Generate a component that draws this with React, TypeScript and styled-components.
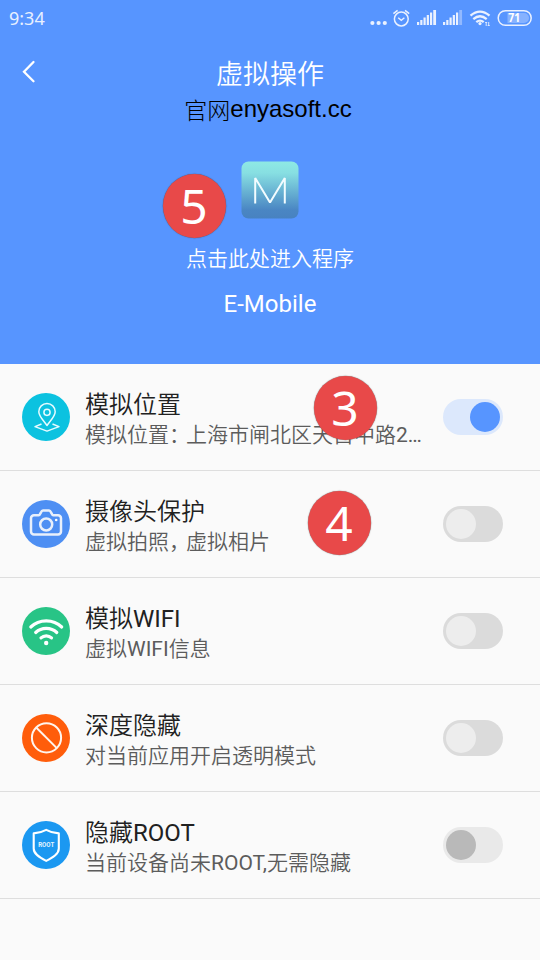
import React from 'react';
import styled, { createGlobalStyle } from 'styled-components';

const GlobalStyle = createGlobalStyle`
  *, *::before, *::after { box-sizing: border-box; }
  body { margin: 0; background: #fafafa; }
`;

const Screen = styled.div`
  position: relative;
  width: 540px;
  height: 960px;
  overflow: hidden;
  background: #fafafa;
  font-family: Roboto, 'Noto Sans CJK SC', sans-serif;
`;

const Header = styled.header`
  display: flex;
  flex-direction: column;
  align-items: center;
  height: 364px;
  background: #5795ff;
  color: #fff;
`;

const StatusBar = styled.div`
  display: flex;
  align-items: center;
  justify-content: space-between;
  width: 100%;
  height: 37px;
  padding: 0 0 0 9px;
`;

const Clock = styled.span`
  font: 400 18px/37px 'Noto Sans', sans-serif;
  color: #e8f0ff;
`;

const TitleBar = styled.div`
  display: grid;
  grid-template-columns: 60px 1fr 60px;
  align-items: center;
  width: 100%;
  height: 70px;
`;

const BackButton = styled.button`
  display: flex;
  align-items: center;
  height: 48px;
  margin: 0;
  padding: 0 0 0 20px;
  border: 0;
  background: none;
  color: #fff;
`;

const Title = styled.h1`
  margin: 0;
  padding-top: 5px;
  font-size: 27px;
  line-height: 40px;
  font-weight: 350;
  text-align: center;
`;

const Site = styled.div`
  display: flex;
  align-items: center;
  justify-content: center;
  height: 30px;
  margin: -13px 4px 0 0;
  color: #000;
  font: 400 24px/30px 'Liberation Sans', sans-serif;
`;

const SiteLabel = styled.span`
  font: 300 23px/30px 'Noto Sans CJK SC', sans-serif;
`;

const AppIcon = styled.svg`
  display: block;
  margin-top: 37px;
`;

const Hint = styled.div`
  margin-top: 25px;
  font-size: 21px;
  line-height: 30px;
  font-weight: 350;
`;

const AppName = styled.div`
  margin-top: 15px;
  font-size: 24px;
  line-height: 30px;
`;

const Row = styled.div`
  display: flex;
  align-items: center;
  height: 107px;
  padding: 0 37.5px 0 22px;
  border-bottom: 1px solid #dedede;
`;

const RowIcon = styled.svg`
  flex: none;
  display: block;
`;

const RowText = styled.div`
  flex: none;
  width: 350px;
  margin: 0 auto 0 15px;
  padding-top: 6px;
`;

const RowTitle = styled.div`
  font-size: 24px;
  line-height: 30px;
  font-weight: 350;
  color: #212121;
`;

const RowDetail = styled.div`
  height: 31px;
  font-size: 21px;
  line-height: 31px;
  font-weight: 350;
  color: #5c5c5c;
  white-space: nowrap;
`;

const Latin = styled.span`
  font-weight: 400;
`;

const Punctuation = styled.span`
  display: inline-block;
  width: 17px;
`;

type ToggleState = 'on' | 'off' | 'disabled';
const trackColor = { on: '#dce8fc', off: '#dbdbdb', disabled: '#e9e9e9' };
const thumbColor = { on: '#5795ff', off: '#ededed', disabled: '#b9b9b9' };

const Toggle = styled.div<{ $state: ToggleState }>`
  display: flex;
  flex: none;
  align-items: center;
  justify-content: ${(p) => (p.$state === 'on' ? 'flex-end' : 'flex-start')};
  width: 60px;
  height: 36px;
  padding: 3px;
  border-radius: 18px;
  background: ${(p) => trackColor[p.$state]};
`;

const Thumb = styled.div<{ $state: ToggleState }>`
  width: 30px;
  height: 30px;
  border-radius: 50%;
  background: ${(p) => thumbColor[p.$state]};
`;

const StepBadge = styled.div<{ $x: number; $y: number }>`
  position: absolute;
  left: ${(p) => p.$x}px;
  top: ${(p) => p.$y}px;
  width: 63px;
  height: 64px;
  border-radius: 50%;
  background: #e84949;
  box-shadow: 0 0 1px 0.3px rgba(60, 60, 60, 0.6);
  color: #fff;
  font: 400 48px/63px 'Noto Sans', sans-serif;
  text-align: center;
`;

/* Han characters keep the lighter weight; Latin runs and wide punctuation get their own spans. */
function Mixed({ text }: { text: string }) {
  return (
    <>
      {text.split(/([\x20-\x7e…]+|[：，])/).map((part, i) => {
        if (/^[\x20-\x7e…]+$/.test(part)) return <Latin key={i}>{part}</Latin>;
        if (/^[：，]$/.test(part)) return <Punctuation key={i}>{part}</Punctuation>;
        return part;
      })}
    </>
  );
}

function StatusIcons() {
  const heights = [3, 5, 7.5, 10, 12.5, 15];
  return (
    <svg width="180" height="37" viewBox="0 0 180 37" fill="none" stroke="#eaf1ff">
      <g fill="#eaf1ff" stroke="none">
        <circle cx="12.4" cy="23" r="2.1" />
        <circle cx="18.6" cy="23" r="2.1" />
        <circle cx="24.8" cy="23" r="2.1" />
        {heights.map((h, i) => (
          <rect key={h} x={57 + i * 3.25} y={25 - h} width={i === 5 ? 2.8 : 2.2} height={h} />
        ))}
        {heights.map((h, i) => (
          <rect key={h} x={83 + i * 3.25} y={25 - h} width={i === 5 ? 2.8 : 2.2} height={h} opacity={i === 5 ? 0.4 : 1} />
        ))}
      </g>
      <circle cx="41.3" cy="19" r="6.9" strokeWidth="1.5" />
      <path d="M38.2 17.8l3.1 2.5 3.1-2.5" strokeWidth="1.4" />
      <path d="M33.4 13.6l4.2-3.2M49.2 13.6l-4.2-3.2" strokeWidth="1.6" />
      <path d="M110.5 15.7Q120 7.5 129.5 15.7M113.3 19.1Q120 13.3 126.7 19.1M116.3 22.2Q120 19 123.7 22.2" strokeWidth="2.3" />
      <circle cx="120" cy="23.6" r="1.6" fill="#eaf1ff" stroke="none" />
      <path d="M126.2 22v4M125.2 23l1-1 1 1M128.7 26v-4M127.7 25l1 1 1-1" strokeWidth="0.9" />
      <rect x="138.2" y="10.7" width="33" height="14.6" rx="7.3" strokeWidth="1.5" />
      <path d="M147.5 13H164a5 5 0 0 1 0 10H147.5z" fill="#86b2ff" stroke="none" />
      <text x="154.3" y="22.2" textAnchor="middle" fill="#fff" stroke="none" fontFamily="Noto Sans" fontSize="12" fontWeight="700" textLength="12" lengthAdjust="spacingAndGlyphs">71</text>
    </svg>
  );
}

const LocationGlyph = () => (
  <g fill="none" stroke="#e6fbff" strokeWidth="1.5" strokeLinejoin="round">
    <path d="M25 32.5C21 27 16.8 23 16.8 18.7a8.2 8.2 0 0 1 16.4 0C33.2 23 29 27 25 32.5z" />
    <circle cx="25" cy="19.3" r="3.1" />
    <path d="M19.5 31L13 33.6l12 4.5 12-4.5-6.5-2.6" />
  </g>
);

const CameraGlyph = () => (
  <g fill="none" stroke="#e9f0fb" strokeWidth="2.5" strokeLinejoin="round">
    <path d="M12 15.3h4.7c1.8 0 2-4.8 4.3-4.8h6c2.3 0 2.5 4.8 4.3 4.8H36a3 3 0 0 1 3 3v13.2a3 3 0 0 1-3 3H12a3 3 0 0 1-3-3V18.3a3 3 0 0 1 3-3z" />
    <circle cx="24.2" cy="24.5" r="6" />
    <circle cx="34.2" cy="20" r="1.3" fill="#fff" stroke="none" />
  </g>
);

const WifiGlyph = () => (
  <g fill="none" stroke="#fff" strokeWidth="3.2" strokeLinecap="round">
    <path d="M8.8 20C17.2 11.7 31.3 11.7 39.7 20" />
    <path d="M13.7 25.5C19.5 19.9 29 19.9 34.8 25.5" />
    <path d="M19 30.9C22 28.1 26.5 28.1 29.5 30.9" />
    <circle cx="24.2" cy="36" r="2.2" fill="#fff" stroke="none" />
  </g>
);

const BlockGlyph = () => (
  <g fill="none" stroke="#fff5ee" strokeWidth="2">
    <circle cx="24.5" cy="23.8" r="14.6" />
    <path d="M14.2 13.5l20.6 20.6" />
  </g>
);

const RootGlyph = () => (
  <g>
    <path d="M24.2 8.8C28 10.9 32 12.2 36.8 12.4V27.5c0 5.6-6 9-12.6 12.4C17.5 36.5 11.7 33.1 11.7 27.5V12.4C16.3 12.2 20.3 10.9 24.2 8.8z" fill="none" stroke="#fff" strokeWidth="2.1" strokeLinejoin="round" />
    <text x="24.2" y="26.3" textAnchor="middle" fill="#e4f4ff" fontFamily="Roboto" fontSize="7.5" fontWeight="700" textLength="16" lengthAdjust="spacingAndGlyphs">ROOT</text>
  </g>
);

const rows: { title: string; detail: string; color: string; state: ToggleState; Glyph: () => React.JSX.Element }[] = [
  { title: '模拟位置', detail: '模拟位置：上海市闸北区天目中路2…', color: '#0bc2e0', state: 'on', Glyph: LocationGlyph },
  { title: '摄像头保护', detail: '虚拟拍照，虚拟相片', color: '#4e8ff3', state: 'off', Glyph: CameraGlyph },
  { title: '模拟WIFI', detail: '虚拟WIFI信息', color: '#28c486', state: 'off', Glyph: WifiGlyph },
  { title: '深度隐藏', detail: '对当前应用开启透明模式', color: '#ff5d0b', state: 'off', Glyph: BlockGlyph },
  { title: '隐藏ROOT', detail: '当前设备尚未ROOT,无需隐藏', color: '#1b98f1', state: 'disabled', Glyph: RootGlyph },
];

export default function App() {
  return (
    <Screen lang="zh-CN">
      <GlobalStyle />
      <Header>
        <StatusBar>
          <Clock>9:34</Clock>
          <StatusIcons />
        </StatusBar>
        <TitleBar>
          <BackButton aria-label="返回">
            <svg width="18" height="24" viewBox="0 0 18 24" fill="none" stroke="currentColor" strokeWidth="2.3" strokeLinecap="round">
              <path d="M13.5 2L4 11.7l9.5 9.5" />
            </svg>
          </BackButton>
          <Title>虚拟操作</Title>
        </TitleBar>
        <Site><SiteLabel>官网</SiteLabel>enyasoft.cc</Site>
        <AppIcon width="58" height="58" viewBox="0 0 58 58">
          <defs>
            <linearGradient id="tile" x1="0" y1="0" x2="0" y2="1">
              <stop offset="0" stopColor="#8ee9e4" />
              <stop offset="0.2" stopColor="#87dfe2" />
              <stop offset="0.85" stopColor="#4a86c3" />
              <stop offset="1" stopColor="#4882c0" />
            </linearGradient>
          </defs>
          <rect x="0.5" y="0.5" width="57" height="57" rx="7" fill="url(#tile)" />
          <path d="M14.2 42.5V17L29 41.5 43.8 17v25.5" fill="none" stroke="#f2fcff" strokeWidth="2" strokeLinejoin="bevel" />
        </AppIcon>
        <Hint>点击此处进入程序</Hint>
        <AppName>E-Mobile</AppName>
      </Header>
      <main>
        {rows.map(({ title, detail, color, state, Glyph }) => (
          <Row key={title}>
            <RowIcon width="48" height="48" viewBox="0 0 48 48">
              <circle cx="24" cy="24" r="24" fill={color} />
              <Glyph />
            </RowIcon>
            <RowText>
              <RowTitle><Mixed text={title} /></RowTitle>
              <RowDetail><Mixed text={detail} /></RowDetail>
            </RowText>
            <Toggle $state={state}><Thumb $state={state} /></Toggle>
          </Row>
        ))}
      </main>
      <StepBadge $x={162.5} $y={174}>5</StepBadge>
      <StepBadge $x={313.5} $y={376}>3</StepBadge>
      <StepBadge $x={307.5} $y={490.5}>4</StepBadge>
    </Screen>
  );
}
